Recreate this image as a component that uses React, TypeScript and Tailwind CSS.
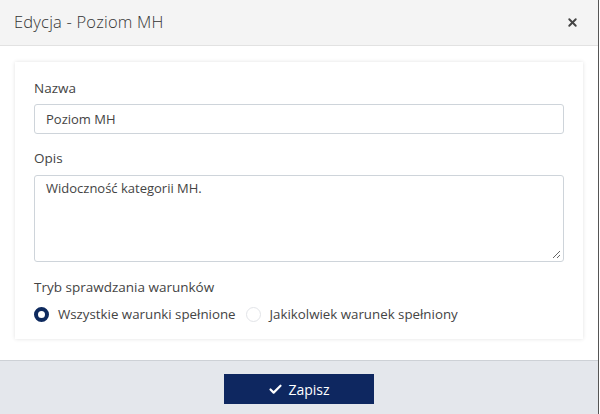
import { Check, X } from "lucide-react";

const font = { fontFamily: '"Open Sans", "Noto Sans", sans-serif' };

function Radio({ checked, label }: { checked?: boolean; label: string }) {
  return (
    <label className="flex items-center gap-[9px]">
      <span
        className={
          checked
            ? "h-[15px] w-[15px] rounded-full border-[4px] border-[#0e2a5e] bg-white"
            : "h-[15px] w-[15px] rounded-full border border-[#e2e4e8] bg-white"
        }
      />
      <span className="text-[13.3px] text-[#444]">{label}</span>
    </label>
  );
}

export default function App() {
  return (
    <div className="flex h-[414px] w-[600px] bg-white" style={font}>
      <div className="flex w-[599px] flex-col border-r border-[#555] bg-white">
        <header className="flex h-[46px] items-center justify-between border-b border-[#e2e2e2] bg-[#f4f4f4] pl-[14px] pr-[19px]">
          <h1 className="text-[16.5px] font-light tracking-[0.2px] text-[#333]">
            Edycja - Poziom MH
          </h1>
          <X className="h-[13px] w-[13px] text-[#444]" strokeWidth={3.5} />
        </header>

        <div className="flex-1 px-[15px] pt-[16px]">
          <div className="flex flex-col bg-white px-[19px] pb-[14px] pt-[16px] shadow-[0_0_4px_rgba(0,0,0,0.12)]">
            <label className="text-[13.5px] text-[#444]">Nazwa</label>
            <div className="mt-[6px] flex h-[30px] items-center rounded-[3px] border border-[#ced4da] px-[11px] text-[13px] text-[#444]">
              Poziom MH
            </div>

            <label className="mt-[14px] text-[13.5px] text-[#444]">Opis</label>
            <div className="relative mt-[6px] h-[87px] rounded-[3px] border border-[#ced4da] px-[11px] pt-[3px] text-[13px] text-[#444]">
              Widoczność kategorii MH.
              <svg
                className="absolute bottom-[2px] right-[2px]"
                width="9"
                height="9"
                viewBox="0 0 9 9"
              >
                <path d="M8 1 L1 8 M8 5 L5 8" stroke="#666" strokeWidth="1" />
              </svg>
            </div>

            <label className="mt-[15px] text-[13.5px] text-[#444]">
              Tryb sprawdzania warunków
            </label>
            <div className="mt-[8px] flex items-center gap-[10px]">
              <Radio checked label="Wszystkie warunki spełnione" />
              <Radio label="Jakikolwiek warunek spełniony" />
            </div>
          </div>
        </div>

        <footer className="flex h-[54px] items-start justify-center border-t border-[#cdd1d6] bg-[#e4e7ec] pt-[13px]">
          <button className="flex h-[30px] w-[150px] items-center justify-center gap-[5px] bg-[#0e2760] text-[14px] text-white">
            <Check className="h-[15px] w-[15px]" strokeWidth={3.5} />
            Zapisz
          </button>
        </footer>
      </div>
    </div>
  );
}
